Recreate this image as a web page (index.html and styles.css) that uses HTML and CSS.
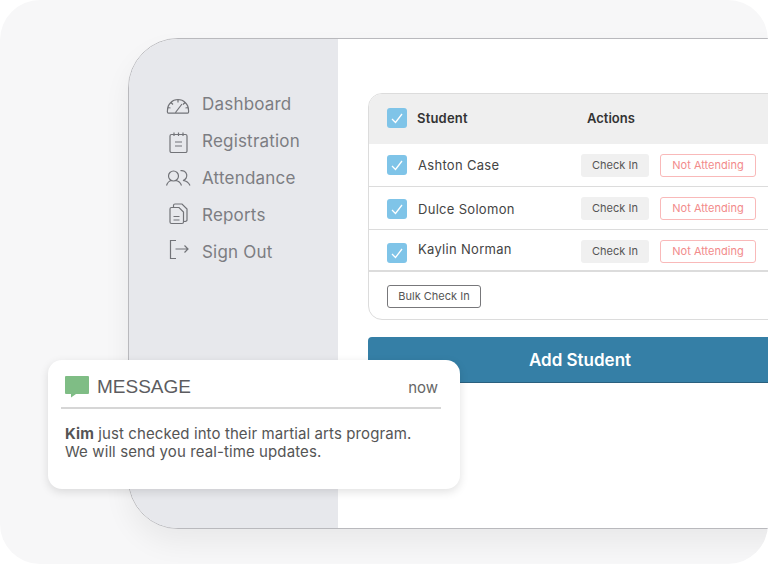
FILE: index.html
```html
<!DOCTYPE html>
<html>
	<head>
		<meta charset="utf-8">
		<title>Attendance</title>
		<link rel="stylesheet" href="styles.css">
	</head>
	<body>
		<div class="stage">
			<div class="window">
				<nav class="sidebar">
					<a class="nav-item">
						<svg class="nav-icon" viewBox="0 0 26 24"><path d="M3.500 21.200 H22.500 Q24 21.200 23.500 18 A10.500 10.500 0 1 0 2.500 18 Q2 21.200 3.500 21.200 Z M2.800 15.500 L5.500 16 M6 10.500 L8 12.500 M13 7.500 V10.500 M20 10.500 L18 12.500 M23.200 15.500 L20.500 16 M10.500 20.500 L17 12"/></svg>
						Dashboard
					</a>
					<a class="nav-item">
						<svg class="nav-icon" viewBox="0 0 26 24"><path d="M6.500 5.500 H20.500 Q22 5.500 22 7 V22 Q22 23.500 20.500 23.500 H6.500 Q5 23.500 5 22 V7 Q5 5.500 6.500 5.500 Z M9 3.500 V7 M13.500 3.500 V7 M18 3.500 V7 M10 13 H17 M10 17 H17"/></svg>
						Registration
					</a>
					<a class="nav-item">
						<svg class="nav-icon" viewBox="0 0 26 24"><path d="M8.500 5 A5 5 0 0 1 8.500 15 A5 5 0 0 1 8.500 5 Z M1.500 19.500 Q3 15 6.500 14.500 M10.500 14.500 Q15 15 16.500 19.500 M15.500 4.700 A5 5 0 0 1 18 14.500 Q23 15 25 19.500"/></svg>
						Attendance
					</a>
					<a class="nav-item">
						<svg class="nav-icon" viewBox="0 0 26 24"><path d="M6.500 4.500 H14 L18.500 9 V19 Q18.500 20.500 17 20.500 H6.500 Q5 20.500 5 19 V6 Q5 4.500 6.500 4.500 Z M8.500 4 V2.500 Q8.500 1 10 1 H17 L22 6 V17 Q22 18.500 19 18.500 M8.500 13.500 H14.500 M8.500 17 H14.500"/></svg>
						Reports
					</a>
					<a class="nav-item">
						<svg class="nav-icon" viewBox="0 0 26 24"><path d="M11 0.500 H5.500 V18.500 H11 M10.500 9 H23 M19.500 5.500 L23 9 L19.500 12.500"/></svg>
						Sign Out
					</a>
				</nav>
				<main class="content">
					<section class="roster">
						<div class="roster-head">
							<span class="check"><svg viewBox="0 0 20 20"><path d="M5 11 L8.500 14.500 L15 6"/></svg></span>
							<span class="col-student">Student</span>
							<span class="col-actions">Actions</span>
						</div>
						<div class="roster-row">
							<span class="check"><svg viewBox="0 0 20 20"><path d="M5 11 L8.500 14.500 L15 6"/></svg></span>
							<span class="name">Ashton Case</span>
							<button class="btn btn-check">Check In</button>
							<button class="btn btn-absent">Not Attending</button>
						</div>
						<div class="roster-row">
							<span class="check check-down"><svg viewBox="0 0 20 20"><path d="M5 11 L8.500 14.500 L15 6"/></svg></span>
							<span class="name name-down">Dulce Solomon</span>
							<button class="btn btn-check">Check In</button>
							<button class="btn btn-absent">Not Attending</button>
						</div>
						<div class="roster-row roster-row-last">
							<span class="check check-low"><svg viewBox="0 0 20 20"><path d="M5 11 L8.500 14.500 L15 6"/></svg></span>
							<span class="name name-high">Kaylin Norman</span>
							<button class="btn btn-check">Check In</button>
							<button class="btn btn-absent">Not Attending</button>
						</div>
						<div class="roster-foot">
							<button class="btn btn-bulk">Bulk Check In</button>
						</div>
					</section>
					<button class="add-student">Add Student</button>
				</main>
			</div>
			<aside class="notice">
				<div class="notice-head">
					<svg class="notice-icon" viewBox="0 0 24 22"><path d="M1 0 H23 Q24 0 24 1 V17 Q24 18 23 18 H11 L6 21.500 V18 H1 Q0 18 0 17 V1 Q0 0 1 0 Z"/></svg>
					<span class="notice-title">MESSAGE</span>
					<span class="notice-time">now</span>
				</div>
				<p class="notice-text"><b>Kim</b> just checked into their martial arts program.<br>We will send you real-time updates.</p>
			</aside>
		</div>
	</body>
</html>
```

FILE: styles.css
```css
* {
	box-sizing: border-box;
}

html, body {
	margin: 0;
	background: #fff;
}

body {
	font-family: "Inter", "Liberation Sans", sans-serif;
}

.stage {
	position: relative;
	width: 768px;
	height: 564px;
	padding: 38px 0 0 128px;
	background: #f7f7f8;
	border-radius: 40px;
	overflow: hidden;
}

.window {
	display: flex;
	width: 700px;
	height: 491px;
	background: #fff;
	border: 1px solid #b9b9bd;
	border-radius: 50px;
	box-shadow: 0 14px 28px rgba(0, 0, 0, 0.06);
	overflow: hidden;
}

.sidebar {
	flex: 0 0 209px;
	padding-top: 46px;
	background: #e7e8ec;
}

.nav-item {
	display: flex;
	align-items: center;
	gap: 11px;
	height: 37px;
	padding-left: 36px;
	font-size: 17px;
	letter-spacing: 0.2px;
	color: #7c7d82;
}

.nav-icon {
	flex: 0 0 26px;
	height: 24px;
	fill: none;
	stroke: #727378;
	stroke-width: 1.2;
}

.content {
	flex: 1;
	padding: 54px 0 0 30px;
}

.roster {
	width: 424px;
	height: 227px;
	border: 1px solid #dcdcdc;
	border-radius: 14px;
	overflow: hidden;
}

.roster-head {
	display: flex;
	align-items: center;
	height: 50px;
	padding: 0 0 2px 18px;
	background: #efefef;
	font-size: 13px;
	font-weight: 600;
	color: #333;
}

.col-student {
	flex: 0 0 170px;
	margin-left: 10px;
	letter-spacing: 0.2px;
}

.roster-row {
	display: flex;
	align-items: center;
	height: 43px;
	padding-left: 18px;
	border-bottom: 1px solid #dcdcdc;
}

.roster-row-last {
	height: 42px;
	padding-top: 2px;
	border-bottom-width: 2px;
}

.check {
	flex: 0 0 20px;
	height: 20px;
	background: #7fc4e8;
	border-radius: 3px;
}

.check svg {
	display: block;
	fill: none;
	stroke: #fff;
	stroke-width: 1.300;
}

.check-down {
	margin-top: 2px;
}

.check-low {
	margin-top: 4px;
}

.name {
	flex: 0 0 163px;
	margin-left: 11px;
	font-size: 13px;
	letter-spacing: 0.3px;
	color: #444;
}

.name-down {
	margin-top: 2px;
}

.name-high {
	margin-top: -4px;
}

.btn {
	height: 23px;
	padding: 0;
	border: 1px solid transparent;
	border-radius: 3px;
	font-family: inherit;
	font-size: 11px;
	background: #fff;
}

.btn-check {
	width: 68px;
	background: #f0f0f0;
	color: #555;
}

.btn-absent {
	width: 96px;
	margin-left: 11px;
	border-color: #f9b9b9;
	color: #f28b8b;
}

.btn-bulk {
	width: 94px;
	border-color: #77777a;
	color: #555;
}

.roster-foot {
	padding: 12px 18px 0;
}

.add-student {
	display: block;
	width: 424px;
	height: 46px;
	margin-top: 17px;
	padding: 0;
	background: #357fa6;
	border: 0;
	border-bottom: 1px solid #2a607e;
	border-radius: 4px 4px 0 0;
	font-family: inherit;
	font-size: 17px;
	font-weight: 600;
	color: #fff;
}

.notice {
	position: absolute;
	left: 48px;
	top: 360px;
	width: 412px;
	height: 129px;
	padding: 0 19px 0 13px;
	background: #fff;
	border-radius: 14px;
	box-shadow: 0 3px 10px rgba(0, 0, 0, 0.12);
}

.notice-head {
	display: flex;
	align-items: center;
	height: 49px;
	padding: 6px 3px 0 4px;
	border-bottom: 2px solid #d6d6d6;
}

.notice-icon {
	flex: 0 0 24px;
	height: 22px;
	fill: #7fbd85;
}

.notice-title {
	flex: 1;
	margin-left: 8px;
	font-family: "Liberation Sans", sans-serif;
	font-size: 19px;
	color: #5c5c60;
}

.notice-time {
	margin-top: 2px;
	font-size: 15px;
	color: #666;
}

.notice-text {
	margin: 16px 0 0 4px;
	font-size: 15px;
	letter-spacing: 0.1px;
	line-height: 18px;
	color: #555;
}

.notice-text b {
	font-weight: 700;
}
```
